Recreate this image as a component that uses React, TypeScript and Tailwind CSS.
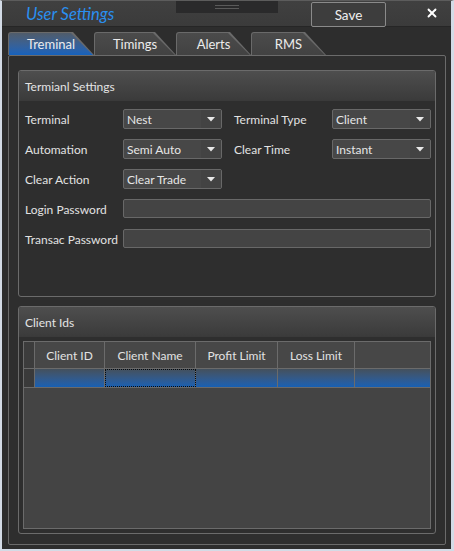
import { X } from "lucide-react";

const FONT = { fontFamily: 'Lato, "Noto Sans", sans-serif' };

function Combo({ value }: { value: string }) {
  return (
    <div className="flex h-[20px] items-stretch rounded-[2px] border border-[#686868] bg-[#474747] text-[12px] text-[#e6e6e6]">
      <span className="flex flex-1 items-center pl-[3px] pt-[2px] leading-none whitespace-nowrap">{value}</span>
      <span className="flex w-[20px] items-center justify-center bg-[#434343]">
        <svg width="8" height="5" viewBox="0 0 8 5">
          <path d="M0 0 H8 L4 4.5 Z" fill="#e8e8e8" />
        </svg>
      </span>
    </div>
  );
}

function Field() {
  return <div className="col-span-4 h-[19px] rounded-[2px] border border-[#686868] bg-[#444444]" />;
}

function Label({ text }: { text: string }) {
  return (
    <span className="flex items-center whitespace-nowrap pt-[2px] text-[12px] text-[#e2e2e2] leading-none">{text}</span>
  );
}

function Tab({ label, active, width }: { label: string; active?: boolean; width: string }) {
  return (
    <div
      className={`relative h-[23px] ${width} rounded-tl-[3px] bg-[#6a6a6a] [clip-path:polygon(0_0,calc(100%-21px)_0,100%_100%,0_100%)]`}
    >
      <div
        className={`absolute inset-x-[1px] top-[1px] bottom-0 rounded-tl-[2px] flex items-center pt-[2px] justify-center text-[13px] text-[#ececec] [clip-path:polygon(0_0,calc(100%-22px)_0,100%_100%,0_100%)] ${
          active ? "bg-gradient-to-b from-[#505c6a] to-[#1462bd]" : "bg-gradient-to-b from-[#4b4b4b] to-[#424242]"
        }`}
      >
        {label}
      </div>
    </div>
  );
}

function GroupHeader({ title }: { title: string }) {
  return (
    <div className="flex h-[30px] items-center border-b border-[#3a3a3a] bg-gradient-to-b from-[#4e4e4e] to-[#3b3b3b] pl-[6px] pt-[2px] text-[12px] text-[#e4e4e4]">
      {title}
    </div>
  );
}

const COLS = [
  { name: "Client ID", w: "w-[70px]" },
  { name: "Client Name", w: "w-[91px]" },
  { name: "Profit Limit", w: "w-[82px]" },
  { name: "Loss Limit", w: "w-[77px]" },
];

export default function App() {
  return (
    <div
      style={FONT}
      className="h-[551px] w-[454px] overflow-hidden border-l-2 border-r-[3px] border-b-2 border-t border-[#d3dbe6] border-t-[#5c5c5c] bg-[#2d2d2d]"
    >
      <div className="flex h-full flex-col">
        {/* title bar */}
        <div className="relative flex h-[26px] shrink-0 items-center border-b border-[#262626] bg-gradient-to-b from-[#404040] to-[#3b3b3b]">
          <span className="pl-[24px] pt-[2px] text-[16.5px] italic text-[#2a8ff0] leading-none">User Settings</span>
          <div className="absolute left-[174px] top-0 flex h-[12px] w-[102px] flex-col items-center justify-center gap-[2px] bg-[#2a2a2b]">
            <span className="h-px w-[24px] bg-[#5a5a5a]" />
            <span className="h-px w-[24px] bg-[#5a5a5a]" />
          </div>
          <button className="absolute left-[309px] top-[1px] flex h-[25px] w-[75px] items-center justify-center rounded-[2px] border border-[#8a8a8a] bg-[#3d3d3d] pt-[1px] text-[13.5px] text-[#f0f0f0]">
            Save
          </button>
          <X className="absolute left-[423px] top-[5px] h-[14px] w-[14px] text-white" strokeWidth={3.2} />
        </div>

        {/* tabs */}
        <div className="mt-[5px] flex pl-[6px]">
          <Tab label="Treminal" active width="w-[86px]" />
          <Tab label="Timings" width="w-[82px]" />
          <Tab label="Alerts" width="w-[75px]" />
          <Tab label="RMS" width="w-[75px]" />
        </div>

        {/* tab content */}
        <div className="ml-[6px] flex h-[490px] w-[438px] flex-col gap-[9px] rounded-[2px] border border-[#6b6b6b] bg-[#2e2e2e] px-[9px] pt-[14px]">
          <div className="flex h-[227px] flex-col overflow-hidden rounded-[3px] border border-[#6b6b6b]">
            <GroupHeader title="Termianl Settings" />
            <div className="grid grid-cols-[98px_99px_12px_98px_99px] grid-rows-[20px_20px_20px_20px_20px] gap-y-[10px] pl-[6px] pt-[8px]">
              <Label text="Terminal" />
              <Combo value="Nest" />
              <span />
              <Label text="Terminal Type" />
              <Combo value="Client" />

              <Label text="Automation" />
              <Combo value="Semi Auto" />
              <span />
              <Label text="Clear Time" />
              <Combo value="Instant" />

              <Label text="Clear Action" />
              <Combo value="Clear Trade" />
              <span />
              <span />
              <span />

              <Label text="Login Password" />
              <Field />

              <Label text="Transac Password" />
              <Field />
            </div>
          </div>

          <div className="flex h-[228px] flex-col overflow-hidden rounded-[3px] border border-[#6b6b6b]">
            <GroupHeader title="Client Ids" />
            <div className="mx-[4px] mt-[4px] flex h-[188px] flex-col border border-[#6b6b6b] bg-[#444444]">
              <div className="flex h-[27px] border-b border-[#6b6b6b] bg-[#474747]">
                <div className="w-[11px] border-r border-[#6b6b6b] bg-[#3c3c3c]" />
                {COLS.map((c) => (
                  <div
                    key={c.name}
                    className={`${c.w} flex items-center justify-center border-r border-[#6b6b6b] pt-[2px] text-[12px] text-[#e2e2e2]`}
                  >
                    {c.name}
                  </div>
                ))}
                <div className="flex-1" />
              </div>
              <div className="flex h-[19px] border-b border-[#6b6b6b]">
                <div className="w-[11px] border-r border-[#6b6b6b] bg-[#3a3a3a]" />
                {COLS.map((c, i) => (
                  <div
                    key={c.name}
                    className={`${c.w} border-r border-[#6b6b6b] bg-gradient-to-b from-[#44505c] to-[#1760b3] ${
                      i === 1 ? "outline-1 -outline-offset-1 outline-dotted outline-[#0a0a0a]" : ""
                    }`}
                  />
                ))}
                <div className="flex-1 bg-gradient-to-b from-[#44505c] to-[#1760b3]" />
              </div>
            </div>
          </div>
        </div>
      </div>
    </div>
  );
}
